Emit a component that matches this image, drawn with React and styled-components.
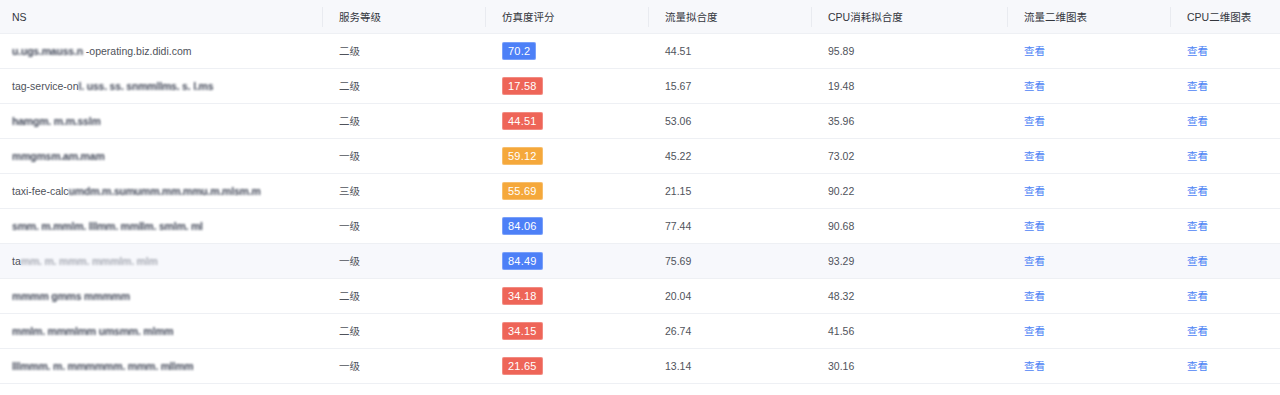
import React from 'react'
import styled, { createGlobalStyle } from 'styled-components'

const GlobalStyle = createGlobalStyle`
  html, body {
    margin: 0;
    padding: 0;
    background: #fff;
  }
  body {
    font-family: "Liberation Sans", "Noto Sans CJK SC", sans-serif;
  }
`

const Table = styled.table`
  width: 1280px;
  border-collapse: collapse;
  table-layout: fixed;
  font-size: 10.5px;
`

const HeadCell = styled.th`
  position: relative;
  height: 33px;
  padding: 0 16px;
  background: #f7f8fb;
  border-bottom: 1px solid #eef0f4;
  color: #33363d;
  font-weight: 400;
  text-align: left;
  white-space: nowrap;

  &:first-child {
    padding-left: 12px;
  }

  &:not(:last-child)::after {
    content: '';
    position: absolute;
    right: 0;
    top: 50%;
    width: 1px;
    height: 20px;
    transform: translateY(-50%);
    background: #e9ebf0;
  }
`

const Row = styled.tr`
  background: ${p => (p.$hover ? '#f7f8fc' : '#fff')};
`

const Cell = styled.td`
  height: 34px;
  padding: 0 16px;
  border-bottom: 1px solid #eef0f4;
  color: #4f535b;
  white-space: nowrap;
  overflow: hidden;

  &:first-child {
    padding-left: 12px;
  }
`

const Level = styled.span`
  position: relative;
  top: -1px;
`

const Masked = styled.span`
  color: #2f3648;
  font-weight: 700;
  filter: blur(1.3px);
  letter-spacing: -0.2px;
  opacity: ${p => (p.$light ? 0.4 : 0.9)};
`

const tones = {
  blue: '#4d80f7',
  red: '#ee6558',
  orange: '#f5a83b',
}

const ScoreTag = styled.span`
  display: inline-block;
  height: 18px;
  line-height: 18px;
  padding: 0 6px;
  border-radius: 2px;
  background: ${p => tones[p.$tone]};
  box-shadow: inset 0 0 0 1px rgba(255, 255, 255, 0.25);
  color: #fff;
  font-size: 11px;
  letter-spacing: 0.2px;
`

const ViewLink = styled.a`
  position: relative;
  top: -1px;
  color: #4d84f5;
  text-decoration: none;
  cursor: pointer;
`

const columns = [
  { title: 'NS', width: 323 },
  { title: '服务等级', width: 163 },
  { title: '仿真度评分', width: 163 },
  { title: '流量拟合度', width: 163 },
  { title: 'CPU消耗拟合度', width: 196 },
  { title: '流量二维图表', width: 163 },
  { title: 'CPU二维图表', width: 109 },
]

const rows = [
  { pre: '', mask: 'u.ugs.mauss.n', post: '-operating.biz.didi.com', level: '二级', score: '70.2', tone: 'blue', flow: '44.51', cpu: '95.89' },
  { pre: 'tag-service-on', mask: 'l. uss. ss. snmmllms. s. l.ms', post: '', level: '二级', score: '17.58', tone: 'red', flow: '15.67', cpu: '19.48' },
  { pre: '', mask: 'hamgm. m.m.sslm', post: '', level: '二级', score: '44.51', tone: 'red', flow: '53.06', cpu: '35.96' },
  { pre: '', mask: 'mmgmsm.am.mam', post: '', level: '一级', score: '59.12', tone: 'orange', flow: '45.22', cpu: '73.02' },
  { pre: 'taxi-fee-calc', mask: 'umdm.m.sumumm.mm.mmu.m.mlsm.m', post: '', level: '三级', score: '55.69', tone: 'orange', flow: '21.15', cpu: '90.22' },
  { pre: '', mask: 'smm. m.mmlm. lllmm. mmllm. smlm. ml', post: '', level: '一级', score: '84.06', tone: 'blue', flow: '77.44', cpu: '90.68' },
  { pre: 'ta', mask: 'mm. m. mmm. mmmlm. mlm', post: '', level: '一级', score: '84.49', tone: 'blue', flow: '75.69', cpu: '93.29', hover: true, light: true },
  { pre: '', mask: 'mmmm gmms mmmmm', post: '', level: '二级', score: '34.18', tone: 'red', flow: '20.04', cpu: '48.32' },
  { pre: '', mask: 'mmlm. mmmlmm umsmm. mlmm', post: '', level: '二级', score: '34.15', tone: 'red', flow: '26.74', cpu: '41.56' },
  { pre: '', mask: 'lllmmm. m. mmmmmm. mmm. mllmm', post: '', level: '一级', score: '21.65', tone: 'red', flow: '13.14', cpu: '30.16' },
]

const App = () => {
  return (
    <>
      <GlobalStyle />
      <Table>
        <colgroup>
          {columns.map(c => (
            <col key={c.title} style={{ width: c.width }} />
          ))}
        </colgroup>
        <thead>
          <tr>
            {columns.map(c => (
              <HeadCell key={c.title}>{c.title}</HeadCell>
            ))}
          </tr>
        </thead>
        <tbody>
          {rows.map((r, i) => (
            <Row key={i} $hover={r.hover}>
              <Cell>
                {r.pre}
                <Masked $light={r.light}>{r.mask}</Masked>
                {r.post && ' ' + r.post}
              </Cell>
              <Cell><Level>{r.level}</Level></Cell>
              <Cell>
                <ScoreTag $tone={r.tone}>{r.score}</ScoreTag>
              </Cell>
              <Cell>{r.flow}</Cell>
              <Cell>{r.cpu}</Cell>
              <Cell><ViewLink>查看</ViewLink></Cell>
              <Cell><ViewLink>查看</ViewLink></Cell>
            </Row>
          ))}
        </tbody>
      </Table>
    </>
  )
}

export default App
